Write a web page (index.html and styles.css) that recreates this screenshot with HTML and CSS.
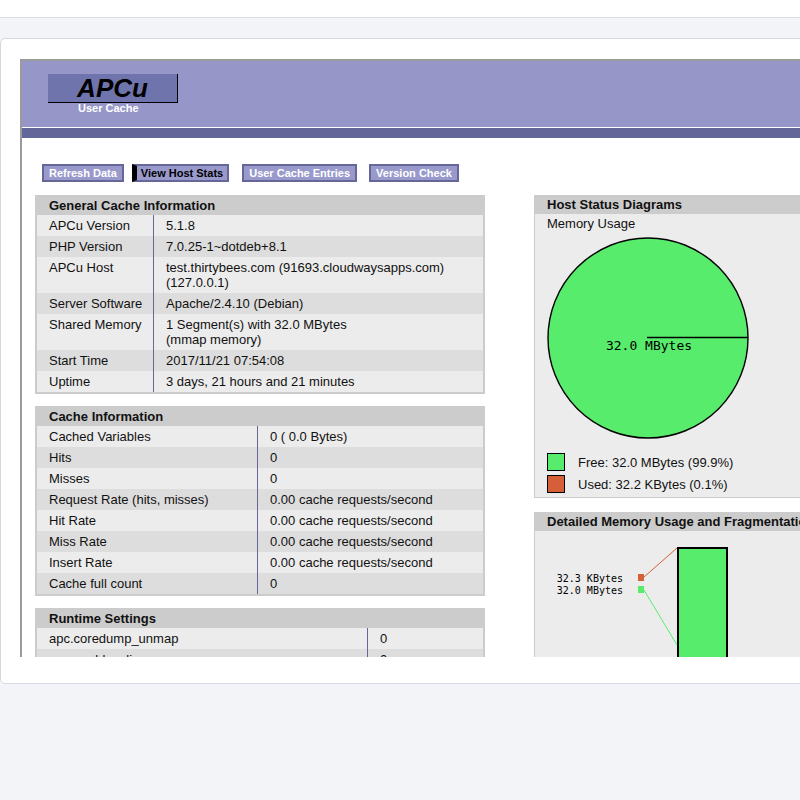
FILE: index.html
```html
<!DOCTYPE html>
<html lang="en">
<head>
<meta charset="utf-8">
<title>APCu User Cache</title>
<link rel="stylesheet" href="styles.css">
</head>
<body>
<div class="topbar"></div>
<div class="band"></div>
<div class="card">
  <div class="frame">
    <div class="head">
      <div class="logo">APCu</div>
      <div class="logo-name">User Cache</div>
    </div>
    <div class="head-rule"></div>
    <div class="menu">
      <a class="btn btn-1">Refresh Data</a>
      <a class="btn btn-active">View Host Stats</a>
      <a class="btn btn-3">User Cache Entries</a>
      <a class="btn btn-4">Version Check</a>
    </div>
    <div class="content">
      <div class="col-left">
        <div class="info">
          <h2>General Cache Information</h2>
          <table class="cl cl-general">
            <tr class="tr-0"><td class="k">APCu Version</td><td>5.1.8</td></tr>
            <tr class="tr-1"><td class="k">PHP Version</td><td>7.0.25-1~dotdeb+8.1</td></tr>
            <tr class="tr-0"><td class="k">APCu Host</td><td>test.thirtybees.com (91693.cloudwaysapps.com)<br>(127.0.0.1)</td></tr>
            <tr class="tr-1"><td class="k">Server Software</td><td>Apache/2.4.10 (Debian)</td></tr>
            <tr class="tr-0"><td class="k">Shared Memory</td><td>1 Segment(s) with 32.0 MBytes<br>(mmap memory)</td></tr>
            <tr class="tr-1"><td class="k">Start Time</td><td>2017/11/21 07:54:08</td></tr>
            <tr class="tr-0"><td class="k">Uptime</td><td>3 days, 21 hours and 21 minutes</td></tr>
          </table>
        </div>
        <div class="info">
          <h2>Cache Information</h2>
          <table class="cl cl-cache">
            <tr class="tr-0"><td class="k">Cached Variables</td><td>0 ( 0.0 Bytes)</td></tr>
            <tr class="tr-1"><td class="k">Hits</td><td>0</td></tr>
            <tr class="tr-0"><td class="k">Misses</td><td>0</td></tr>
            <tr class="tr-1"><td class="k">Request Rate (hits, misses)</td><td>0.00 cache requests/second</td></tr>
            <tr class="tr-0"><td class="k">Hit Rate</td><td>0.00 cache requests/second</td></tr>
            <tr class="tr-1"><td class="k">Miss Rate</td><td>0.00 cache requests/second</td></tr>
            <tr class="tr-0"><td class="k">Insert Rate</td><td>0.00 cache requests/second</td></tr>
            <tr class="tr-1"><td class="k">Cache full count</td><td>0</td></tr>
          </table>
        </div>
        <div class="info">
          <h2>Runtime Settings</h2>
          <table class="cl cl-runtime">
            <tr class="tr-0"><td class="k">apc.coredump_unmap</td><td>0</td></tr>
            <tr class="tr-1"><td class="k">apc.enable_cli</td><td>0</td></tr>
            <tr class="tr-0"><td class="k">apc.enabled</td><td>1</td></tr>
          </table>
        </div>
      </div>
      <div class="col-right">
        <div class="graph">
          <h2>Host Status Diagrams</h2>
          <div class="graph-body">
            <div class="graph-label">Memory Usage</div>
            <svg class="pie" width="265" height="219" viewBox="0 0 265 219">
              <circle cx="113" cy="106" r="100" fill="#58ec6c" stroke="#000" stroke-width="1.4"/>
              <line x1="112" y1="105.5" x2="213" y2="105.5" stroke="#000" stroke-width="1.4"/>
              <text x="114" y="118" class="mono13" text-anchor="middle">32.0 MBytes</text>
            </svg>
            <div class="legend"><span class="sw sw-free"></span>Free: 32.0 MBytes (99.9%)</div>
            <div class="legend"><span class="sw sw-used"></span>Used: 32.2 KBytes (0.1%)</div>
          </div>
        </div>
        <div class="graph graph-frag">
          <h2>Detailed Memory Usage and Fragmentation</h2>
          <div class="graph-body">
            <svg class="frag" width="265" height="200" viewBox="0 0 265 200">
              <rect x="143" y="17" width="49" height="200" fill="#58ec6c" stroke="#000" stroke-width="2"/>
              <line x1="109" y1="46" x2="142" y2="17" stroke="#d55f39" stroke-width="1"/>
              <line x1="109" y1="59" x2="142" y2="114" stroke="#58ec6c" stroke-width="1"/>
              <rect x="103" y="43" width="6" height="7" fill="#d55f39"/>
              <rect x="103" y="55" width="6" height="7" fill="#58ec6c"/>
              <text x="88" y="51" class="mono10" text-anchor="end">32.3 KBytes</text>
              <text x="88" y="63" class="mono10" text-anchor="end">32.0 MBytes</text>
            </svg>
          </div>
        </div>
      </div>
    </div>
  </div>
</div>
</body>
</html>
```
FILE: styles.css
```css
html, body {
  overflow: hidden;
}
body {
  margin: 0;
  background: #f3f4f7;
  font-family: "Liberation Sans", Arial, sans-serif;
  color: #111;
}
.topbar {
  height: 17px;
  background: #fff;
  border-bottom: 1px solid #dcdde2;
}
.band {
  height: 20px;
  background: #f3f4f7;
}
.card {
  background: #fff;
  border: 1px solid #d5d8e1;
  border-radius: 5px;
  margin-right: -40px;
  padding: 20px 0 26px 19px;
}
.frame {
  height: 596px;
  overflow: hidden;
  border-top: 2px solid #9a9a9a;
  border-left: 2px solid #9a9a9a;
}
.head {
  height: 66px;
  background: rgb(150, 150, 200);
  padding: 13px 0 0 26px;
  box-sizing: border-box;
}
.logo {
  width: 129px;
  height: 28px;
  line-height: 29px;
  background: #7074ad;
  border-right: 1px solid #000;
  border-bottom: 1px solid #000;
  color: #000;
  font-size: 26px;
  font-weight: bold;
  font-style: italic;
  text-align: center;
}
.logo-name {
  margin-left: 30px;
  color: #fff;
  font-size: 11px;
  font-weight: bold;
  line-height: 11px;
}
.head-rule {
  height: 10px;
  border-top: 1px solid #fff;
  background: rgb(98, 102, 152);
}
.menu {
  display: flex;
  margin-top: 26px;
  padding-left: 20px;
}
.btn {
  display: block;
  background: rgb(153, 153, 204);
  border: 2px solid rgb(102, 102, 153);
  color: #fff;
  font-size: 11px;
  font-weight: bold;
  line-height: 14px;
  padding: 0 5px;
  text-decoration: none;
}
.btn-active {
  margin-left: 8px;
  padding: 0 4px;
  color: #000;
  border-left: 5px solid #000;
}
.btn-3 {
  margin-left: 13px;
}
.btn-4 {
  margin-left: 12px;
}
.content {
  display: flex;
  margin-top: 13px;
  padding-left: 13px;
}
.col-left {
  width: 450px;
  flex: none;
}
.col-right {
  width: 400px;
  flex: none;
  margin-left: 49px;
}
.info {
  background: #ccc;
  padding: 0 2px 2px;
  margin-bottom: 12px;
}
.info h2, .graph h2 {
  margin: 0;
  height: 20px;
  line-height: 21px;
  padding-left: 12px;
  font-size: 13px;
  font-weight: bold;
  color: #111;
}
.cl {
  width: 100%;
  border-collapse: separate;
  border-spacing: 0;
  table-layout: fixed;
  font-size: 13px;
}
.cl td {
  padding: 3px 12px;
  line-height: 15px;
  vertical-align: top;
  white-space: nowrap;
}
.cl td.k {
  box-sizing: border-box;
  border-right: 1px solid rgb(102, 102, 153);
}
.cl-general td.k { width: 117px; }
.cl-cache td.k { width: 221px; }
.cl-runtime td.k { width: 331px; }
.tr-0 { background: #ececec; }
.tr-1 { background: #dddddd; }
.graph {
  border: 1px solid #ccc;
  border-top: 0;
  background: #ccc;
}
.graph h2 {
  height: 19px;
  line-height: 19px;
}
.graph-body {
  background: #ececec;
  padding-bottom: 2px;
  font-size: 13px;
}
.graph-label {
  padding: 2px 12px 1px;
  line-height: 15px;
  height: 18px;
  box-sizing: border-box;
}
.pie, .frag {
  display: block;
}
.mono13 {
  font-family: "DejaVu Sans Mono", "Liberation Mono", monospace;
  font-size: 13px;
  fill: #000;
}
.mono10 {
  font-family: "DejaVu Sans Mono", "Liberation Mono", monospace;
  font-size: 10px;
  fill: #000;
}
.legend {
  display: flex;
  align-items: center;
  height: 22px;
  padding-left: 12px;
}
.sw {
  width: 16px;
  height: 16px;
  border: 1px solid #000;
  margin-right: 13px;
}
.sw-free { background: #58ec6c; }
.sw-used { background: #d55f39; }
.graph-frag {
  margin-top: 14px;
}
.graph-frag .graph-body {
  height: 200px;
}
```
